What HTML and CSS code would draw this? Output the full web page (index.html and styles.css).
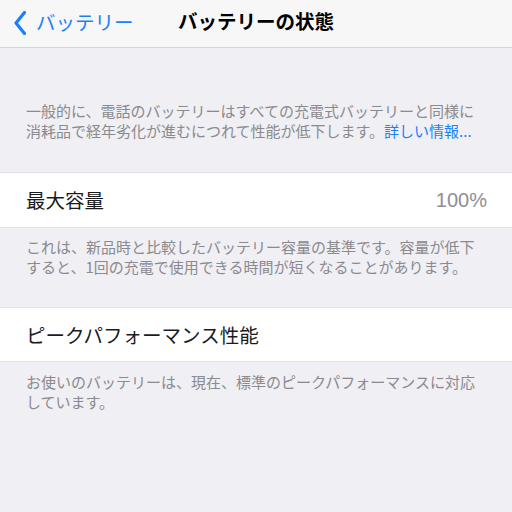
FILE: index.html
```html
<!DOCTYPE html>
<html lang="ja">
<head>
<meta charset="utf-8">
<title>バッテリーの状態</title>
<link rel="stylesheet" href="styles.css">
</head>
<body>
<header class="nav">
  <a class="back" href="#">
    <svg class="chev" width="12" height="24" viewBox="0 0 12 24" aria-hidden="true">
      <path d="M10.5 1.5 L2 12 L10.5 22.5" fill="none" stroke="currentColor" stroke-width="3.2" stroke-linecap="round" stroke-linejoin="round"/>
    </svg>
    <span>バッテリー</span>
  </a>
  <h1 class="title">バッテリーの状態</h1>
  <div class="spacer"></div>
</header>
<main>
  <p class="intro">一般的に、電話のバッテリーはすべての充電式バッテリーと同様に消耗品で経年劣化が進むにつれて性能が低下します。<a class="link" href="#">詳しい情報...</a></p>
  <div class="row">
    <span class="label">最大容量</span>
    <span class="value">100%</span>
  </div>
  <p class="foot">これは、新品時と比較したバッテリー容量の基準です。容量が低下すると、1回の充電で使用できる時間が短くなることがあります。</p>
  <div class="row row-b">
    <span class="label">ピークパフォーマンス性能</span>
  </div>
  <p class="foot foot-b">お使いのバッテリーは、現在、標準のピークパフォーマンスに対応しています。</p>
</main>
</body>
</html>
```
FILE: styles.css
```css
html, body {
  margin: 0;
  padding: 0;
}
body {
  width: 512px;
  height: 512px;
  overflow: hidden;
  background: #efeff4;
  font-family: "Noto Sans CJK JP", "Noto Sans", sans-serif;
  color: #000;
}
.nav {
  height: 47px;
  background: #f7f7f8;
  border-bottom: 1px solid #d3d3d7;
  display: grid;
  grid-template-columns: 1fr auto 1fr;
  align-items: center;
}
.back {
  display: flex;
  align-items: center;
  gap: 10px;
  padding-left: 14px;
  color: #1a80f9;
  text-decoration: none;
  font-size: 19.5px;
  line-height: 24px;
}
.chev {
  display: block;
  margin-top: -2px;
}
.back span {
  margin-top: -4px;
}
.title {
  margin: -5px 0 0;
  font-size: 19.5px;
  font-weight: 700;
  line-height: 24px;
}
.intro,
.foot {
  margin: 0;
  font-size: 15px;
  line-height: 20px;
  color: #8a8a8f;
  padding: 0 26px;
}
.intro {
  padding-top: 53px;
  padding-bottom: 31px;
}
.link {
  color: #1a80f9;
  text-decoration: none;
}
.row {
  height: 54px;
  background: #fff;
  border-top: 1px solid #e2e2e6;
  border-bottom: 1px solid #e2e2e6;
  display: flex;
  align-items: center;
  justify-content: space-between;
  padding: 0 25px 0 26px;
}
.row-b {
  height: 53px;
}
.label {
  font-size: 19.5px;
  color: #1c1c1e;
  margin-top: -1px;
}
.value {
  font-family: "Liberation Sans", "Noto Sans", sans-serif;
  font-size: 20px;
  color: #8e8e93;
}
.foot {
  padding-top: 9px;
  padding-bottom: 30px;
}
.foot-b {
  padding-top: 10px;
}
```
